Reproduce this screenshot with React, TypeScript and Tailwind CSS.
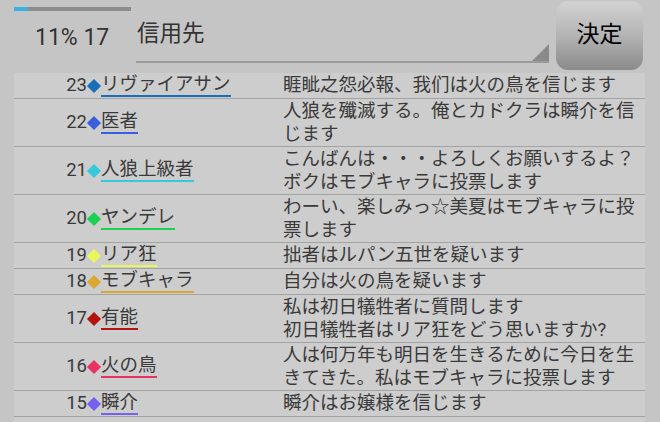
const rows = [
	{ no: 23, name: "リヴァイアサン", color: "#1a6db8", msg: ["睚眦之怨必報、我们は火の鳥を信じます"] },
	{ no: 22, name: "医者", color: "#3b5fdc", msg: ["人狼を殲滅する。俺とカドクラは瞬介を信", "じます"] },
	{ no: 21, name: "人狼上級者", color: "#36c9dc", msg: ["こんばんは・・・よろしくお願いするよ？", "ボクはモブキャラに投票します"] },
	{ no: 20, name: "ヤンデレ", color: "#1ccf55", msg: ["わーい、楽しみっ☆美夏はモブキャラに投", "票します"] },
	{ no: 19, name: "リア狂", color: "#eaf75c", msg: ["拙者はルパン五世を疑います"] },
	{ no: 18, name: "モブキャラ", color: "#dba832", msg: ["自分は火の鳥を疑います"] },
	{ no: 17, name: "有能", color: "#b3150e", msg: ["私は初日犠牲者に質問します", "初日犠牲者はリア狂をどう思いますか?"] },
	{ no: 16, name: "火の鳥", color: "#ea3262", msg: ["人は何万年も明日を生きるために今日を生", "きてきた。私はモブキャラに投票します"] },
	{ no: 15, name: "瞬介", color: "#7461f2", msg: ["瞬介はお嬢様を信じます"] },
];

const font = { fontFamily: 'Roboto, "Noto Sans CJK JP", sans-serif' };

function Header() {
	return (
		<div className="flex h-[73px] shrink-0">
			<div className="w-[136px] shrink-0 flex flex-col pl-[14px]">
				<div className="mt-[7px] h-[4px] w-[117px] bg-[#8d8d8d] flex">
					<div className="w-[14px] h-full bg-[#3cb0e2]" />
				</div>
				<div className="mt-[13px] pl-[21px] text-[23px] leading-[28px] text-[#333]">11% 17</div>
			</div>
			<div className="w-[413px] shrink-0 flex flex-col">
				<div className="relative flex-1 mt-[2px] mb-[10px] border-b-2 border-[#9a9a9a]">
					<div className="pl-[1px] pt-[18px] text-[22.5px] leading-[26px] text-[#333]">信用先</div>
					<svg className="absolute right-0 bottom-0" width="17" height="17" viewBox="0 0 17 17">
						<polygon points="17,0 17,17 0,17" fill="#8a8a8a" />
					</svg>
				</div>
			</div>
			<div className="flex-1 pl-[7px] pr-[17px] pt-[1px] pb-[3px]">
				<button className="w-full h-full rounded-[12px] bg-gradient-to-b from-[#d2d2d2] via-[#b4b4b4] to-[#8a8a8a] text-black text-[23px] leading-none pb-[2px]">
					決定
				</button>
			</div>
		</div>
	);
}

function Row({ no, name, color, msg }: (typeof rows)[number]) {
	return (
		<div className="flex items-center border-b border-[#a3a3a3] py-px">
			<div className="w-[269px] shrink-0 flex items-center">
				<span className="w-[73px] text-right leading-[21px]">{no}</span>
				<span className="w-[14px] flex items-center justify-center">
					<span className="block w-[10px] h-[10px] rotate-45" style={{ backgroundColor: color }} />
				</span>
				<span className="leading-[21px] border-b-2" style={{ borderColor: color }}>
					{name}
				</span>
			</div>
			<div className="flex-1 flex flex-col leading-[22.5px] whitespace-nowrap">
				{msg.map((line) => (
					<span key={line}>{line}</span>
				))}
			</div>
		</div>
	);
}

export default function App() {
	return (
		<div className="w-[660px] h-[422px] overflow-hidden bg-[#c5c5c5] flex flex-col" style={font}>
			<Header />
			<div className="ml-[14px] w-[631px] flex-1 bg-[#cdcdcd] text-[18.5px] text-[#3a3a3a]">
				{rows.map((r) => (
					<Row key={r.no} {...r} />
				))}
			</div>
		</div>
	);
}
